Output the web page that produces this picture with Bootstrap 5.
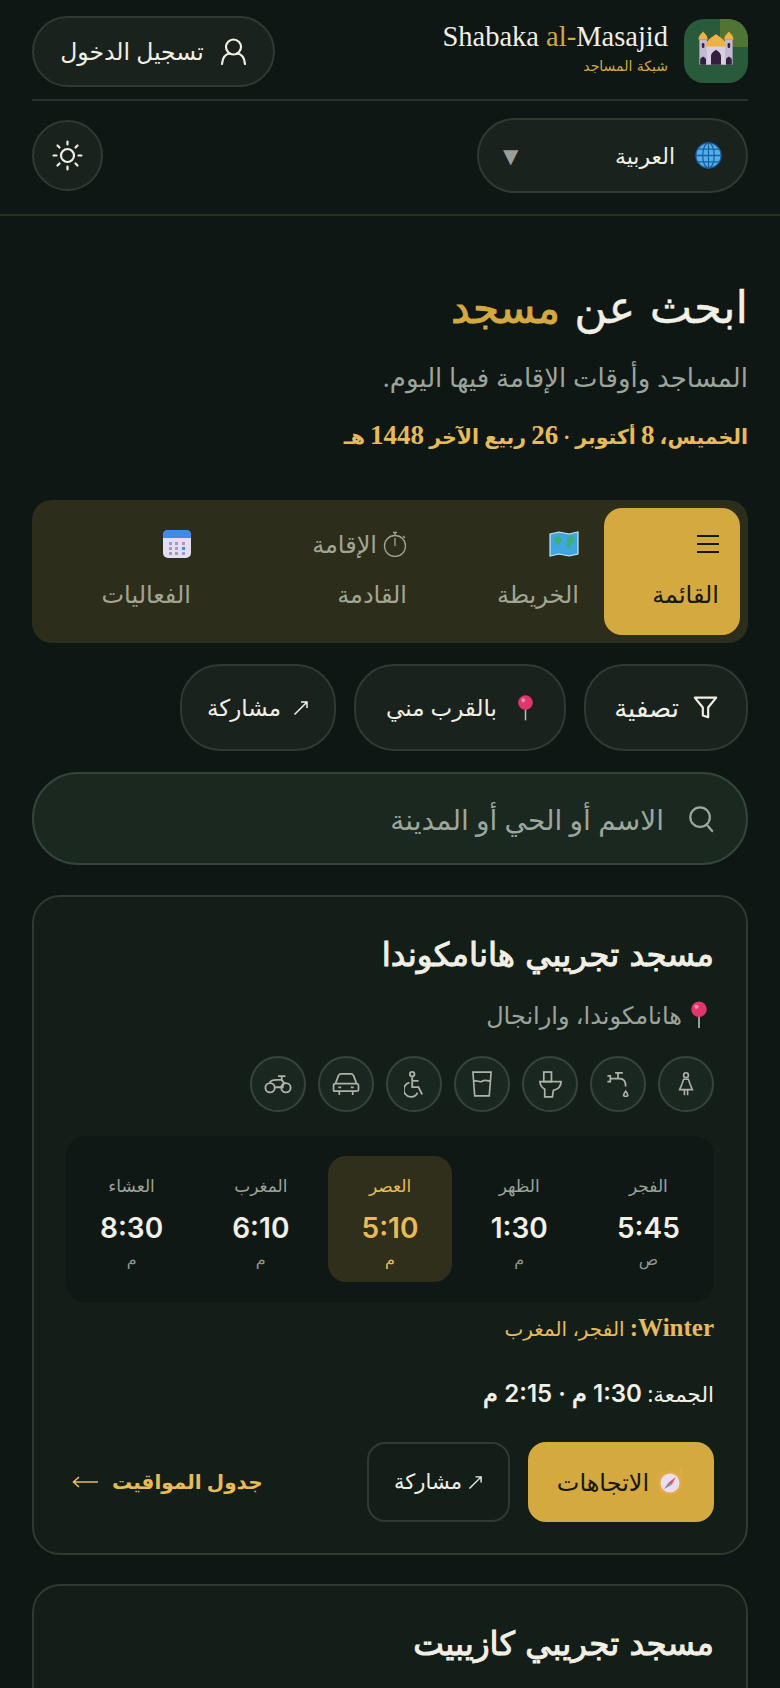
<!DOCTYPE html>
<html lang="ar" dir="rtl">
<head>
<meta charset="UTF-8">
<meta name="viewport" content="width=device-width, initial-scale=1.0">
<title>Shabaka al-Masajid</title>
<link rel="stylesheet" href="https://cdn.jsdelivr.net/npm/bootstrap@5.3.0/dist/css/bootstrap.min.css">
<style>
html, body { height: 1688px; overflow: hidden; }
body { background: #0e1714; color: #f2efe4; font-family: "Noto Sans", "DejaVu Sans", sans-serif; font-size: 20px; }
svg { flex: none; display: block; }
.site-head { padding: 16px 32px 0; border-bottom: 2px solid #252f27; height: 216px; }
.head-top { height: 85px; border-bottom: 2px solid #2a342c; align-items: flex-start; }
.head-bottom { padding-top: 17px; }
.logo-box { width: 64px; height: 64px; margin-top: 3px; border-radius: 20px; background: #2a5a3c; overflow: hidden; position: relative; }
.logo-box::before { content: ""; position: absolute; top: 0; right: 0; width: 28px; height: 28px; background: #4f7433; }
.logo-box svg { position: relative; }
.brand-name { font-family: "Liberation Serif", serif; font-size: 28.500px; line-height: 34px; margin-top: 4px; }
.brand-name em { font-style: normal; color: #d4a93f; }
.brand-sub { font-family: "DejaVu Sans", sans-serif; font-size: 14px; color: #d4a93f; line-height: 20px; margin-top: 2px; }
.pill-btn { background: #1a221e; border: 2px solid #2f3a33; border-radius: 40px; color: #f2efe4; display: flex; align-items: center; gap: 16px; font-size: 23px; padding: 0; }
.login-btn { width: 243px; height: 71px; justify-content: center; font-size: 23.500px; }
.lang-btn { width: 271px; height: 75px; padding: 0 24px; justify-content: flex-start; font-size: 22px; gap: 20px; }
.lang-btn .caret-mark { margin-inline-start: auto; color: #9c9f96; font-size: 20px; }
.sun-btn { width: 71px; height: 71px; justify-content: center; margin-top: 2px; }
.hero-box { padding: 0 32px; }
.hero-title { font-family: "DejaVu Sans", sans-serif; font-size: 45px; line-height: 60px; margin: 62px 0 0; font-weight: 400; -webkit-text-stroke: .4px currentColor; }
.hero-title em { font-style: normal; font-size: 42px; color: #d4a93f; -webkit-text-stroke: 1px currentColor; }
.hero-sub { color: #9ca39b; font-size: 26px; line-height: 36px; margin: 20px 0 0; }
.hero-date { color: #e8bb57; font-family: "Liberation Serif", "DejaVu Sans", serif; font-size: 20.500px; line-height: 32px; margin: 24px 0 0; font-weight: 700; }
.hero-date b { font-size: 27px; }
.tab-bar { margin-top: 47px; background: #2c2d1b; border-radius: 20px; padding: 8px; height: 143px; gap: 4px; }
.tab-item { color: #a3a594; font-size: 24px; line-height: 50px; padding: 11px 21px 17px; text-align: start; border-radius: 18px; white-space: nowrap; }
.tab-item .tab-line { display: flex; align-items: center; gap: 6px; height: 50px; }
.tab-active { background: #d4a93f; color: #17170b; width: 136px; }
.tab-map { width: 168px; }
.tab-iqama { width: 212px; }
.tab-events { width: 170px; }
.tool-row { margin-top: 21px; gap: 18px; }
.tool-btn { height: 87px; justify-content: center; gap: 14px; }
.tool-filter { width: 164px; font-size: 26px; }
.tool-near { width: 212px; gap: 20px; }
.tool-share { width: 156px; gap: 12px; }
.find-box { margin-top: 21px; height: 93px; background: #1a2820; border: 2px solid #34443a; border-radius: 46px; padding: 0 32px; gap: 24px; color: #9ca69d; font-size: 28px; }
.mosque-card { background: #141e19; border: 2px solid #2f3a30; border-radius: 28px; padding: 30px 32px; }
.card-one { margin-top: 30px; height: 660px; }
.card-two { margin-top: 29px; height: 300px; }
.mosque-name { font-family: "DejaVu Sans", sans-serif; font-size: 32.500px; font-weight: 400; -webkit-text-stroke: 1px currentColor; line-height: 48px; margin: 4px 0 0; }
.mosque-place { color: #9ca39b; font-size: 24px; line-height: 32px; margin: 20px 0 0; gap: 8px; }
.place-pin { margin-inline-start: 6px; }
.amenity-row { gap: 12px; margin-top: 25px; }
.amenity-dot { width: 56px; height: 56px; border-radius: 50%; border: 2px solid #37433b; background: #1a2620; color: #aeb2a8; display: flex; align-items: center; justify-content: center; }
.times-box { margin-top: 24px; background: #0f1814; border-radius: 20px; padding: 20px 4px; height: 166px; gap: 6px; }
.time-cell { flex: 1 1 0; text-align: center; height: 126px; border-radius: 18px; padding-top: 16px; }
.time-now { background: #2f2f1c; }
.time-now .time-name, .time-now .time-mer { color: #e8bb57; }
.time-now .time-val { color: #e8bb57; }
.time-name { color: #9ca39b; font-size: 17px; line-height: 28px; }
.time-val { font-family: "Inter", sans-serif; font-weight: 600; font-size: 28px; line-height: 40px; margin-top: 8px; }
.time-mer { color: #8f968e; font-size: 16px; line-height: 22px; }
.season-line { color: #e8bb57; font-size: 20px; margin-top: 10px; line-height: 32px; }
.season-line b { font-family: "Liberation Serif", serif; font-size: 25px; }
.friday-line { color: #f2efe4; font-size: 21.500px; margin-top: 33px; line-height: 32px; }
.friday-line b { font-family: "Inter", sans-serif; font-weight: 600; font-size: 24px; }
.action-row { margin-top: 32px; gap: 18px; }
.go-btn { width: 186px; height: 80px; background: #d4a93f; color: #17170b; border-radius: 18px; border: 0; font-size: 24px; display: flex; align-items: center; justify-content: center; gap: 8px; padding: 0; }
.share-btn { width: 143px; height: 80px; background: transparent; border: 2px solid #2f3a33; color: #f2efe4; border-radius: 18px; font-size: 21px; display: flex; align-items: center; justify-content: center; gap: 6px; padding: 0; }
.table-link { color: #e8bb57; text-decoration: none; font-size: 20px; font-weight: 700; margin-inline-start: auto; margin-inline-end: 6px; display: flex; gap: 14px; align-items: center; }
</style>
</head>
<body>

<header class="site-head">
  <div class="head-top d-flex justify-content-between">
    <div class="d-flex gap-3">
      <div class="logo-box">
        <svg width="64" height="64" viewBox="-6.500 -3 77 77">
          <rect x="14" y="24" width="36" height="28" fill="#d9cfe2"/>
          <rect x="12" y="22" width="9" height="30" fill="#c5b8d2"/>
          <rect x="43" y="22" width="9" height="30" fill="#c5b8d2"/>
          <path d="M11 22c0-5 3-7 5.500-10 2.500 3 5.500 5 5.500 10zM42 22c0-5 3-7 5.500-10 2.500 3 5.500 5 5.500 10z" fill="#eeb244"/>
          <path d="M20 30c0-8 6-10 12-15 6 5 12 7 12 15z" fill="#eeb244"/>
          <path d="M26 52V42c0-4 3-6 6-8 3 2 6 4 6 8v10zM13 52v-6c0-2 2-3 3.500-4 1.500 1 3.500 2 3.500 4v6zM44 52v-6c0-2 2-3 3.500-4 1.500 1 3.500 2 3.500 4v6z" fill="#33203f"/>
          <rect x="15" y="26" width="3" height="6" rx="1.500" fill="#33203f"/>
          <rect x="46" y="26" width="3" height="6" rx="1.500" fill="#33203f"/>
        </svg>
      </div>
      <div>
        <div class="brand-name" dir="ltr">Shabaka <em>al-</em>Masajid</div>
        <div class="brand-sub">شبكة المساجد</div>
      </div>
    </div>
    <button class="pill-btn login-btn" type="button">
      <svg width="27" height="27" viewBox="0 0 27 27" fill="none" stroke="#f2efe4" stroke-width="2.200" stroke-linecap="round"><circle cx="13.500" cy="9" r="7.500"/><path d="M2 26c.5-6 3.500-10 8-10.500M25 26c-.5-6-3.500-10-8-10.500"/></svg>
      <span>تسجيل الدخول</span>
    </button>
  </div>
  <div class="head-bottom d-flex justify-content-between align-items-start">
    <button class="pill-btn lang-btn" type="button">
      <svg width="27" height="27" viewBox="0 0 28 28" fill="none" stroke="#1d5f9e" stroke-width="1.300"><circle cx="14" cy="14" r="13" fill="#4eb1ec"/><ellipse cx="14" cy="14" rx="6" ry="13"/><path d="M14 1v26M1 14h26M3 7.500h22M3 20.500h22"/></svg>
      <span>العربية</span>
      <span class="caret-mark">▼</span>
    </button>
    <button class="pill-btn sun-btn" type="button" aria-label="theme">
      <svg width="31" height="31" viewBox="0 0 31 31" fill="none" stroke="#f2efe4" stroke-width="2.200" stroke-linecap="round"><circle cx="15.500" cy="15.500" r="6.500"/><path d="M15.500 1.500v3M15.500 26.500v3M1.500 15.500h3M26.500 15.500h3M5.500 5.500l2 2M23.500 23.500l2 2M5.500 25.500l2-2M23.500 7.500l2-2"/></svg>
    </button>
  </div>
</header>

<main class="hero-box">
  <h1 class="hero-title">ابحث عن <em>مسجد</em></h1>
  <p class="hero-sub">المساجد وأوقات الإقامة فيها اليوم.</p>
  <p class="hero-date">الخميس، <b>8</b> أكتوبر · <b>26</b> ربيع الآخر <b>1448</b> هـ</p>

  <div class="tab-bar d-flex">
    <div class="tab-item tab-active">
      <div class="tab-line"><svg width="22" height="20" viewBox="0 0 22 20" stroke="#17170b" stroke-width="2"><path d="M0 2h22M0 10h22M0 18h22"/></svg></div>
      <div>القائمة</div>
    </div>
    <div class="tab-item tab-map">
      <div class="tab-line"><svg width="30" height="26" viewBox="0 0 30 26"><path d="M1 3l9-2 10 2 9-2v22l-9 2-10-2-9 2z" fill="#3ea6e0" stroke="#cfe6f4" stroke-width="1.200"/><path d="M5 7l5-2 3 3-2 5-4 1zM18 6l6-1 2 5-4 3-1 6-3-3z" fill="#3fae7a"/></svg></div>
      <div>الخريطة</div>
    </div>
    <div class="tab-item tab-iqama">
      <div class="tab-line"><svg width="24" height="26" viewBox="0 0 24 26" fill="none" stroke="#a3a594" stroke-width="1.300"><circle cx="12" cy="15" r="10.500"/><path d="M12 15V7M10 1.500h4M12 1.500v3M20 5l2 2"/></svg><span>الإقامة</span></div>
      <div>القادمة</div>
    </div>
    <div class="tab-item tab-events">
      <div class="tab-line"><svg width="28" height="28" viewBox="0 0 28 28"><rect width="28" height="28" rx="5" fill="#e6ddf4"/><path d="M0 8V5a5 5 0 0 1 5-5h18a5 5 0 0 1 5 5v3z" fill="#3a8df0"/><path d="M6 12h3v3H6zM12 12h3v3h-3zM6 17h3v3H6zM12 17h3v3h-3zM6 22h3v3H6zM12 22h3v3h-3zM19 22h3v3h-3zM19 12h3v3h-3z" fill="#a49db5"/><path d="M19 17h3v3h-3z" fill="#3a8df0"/></svg></div>
      <div>الفعاليات</div>
    </div>
  </div>

  <div class="tool-row d-flex">
    <button class="pill-btn tool-btn tool-filter" type="button">
      <svg width="25" height="25" viewBox="0 0 28 28" fill="none" stroke="#f2efe4" stroke-width="2.400" stroke-linejoin="round"><path d="M2 3h24L17 14v11l-6-2v-9z"/></svg>
      <span>تصفية</span>
    </button>
    <button class="pill-btn tool-btn tool-near" type="button">
      <svg width="17" height="28" viewBox="0 0 22 34"><rect x="10" y="14" width="2" height="19" fill="#b9b9ae"/><circle cx="11" cy="10" r="9.500" fill="#e0356e"/><circle cx="8" cy="7" r="2.500" fill="#f58fb0"/></svg>
      <span>بالقرب مني</span>
    </button>
    <button class="pill-btn tool-btn tool-share" type="button">
      <svg width="16" height="16" viewBox="0 0 16 16" fill="none" stroke="#f2efe4" stroke-width="1.500"><path d="M1.500 14.500L14 2M8 2h6v6"/></svg>
      <span>مشاركة</span>
    </button>
  </div>

  <div class="find-box d-flex align-items-center">
    <svg width="26" height="28" viewBox="0 0 28 30" fill="none" stroke="#9ca69d" stroke-width="2.400" stroke-linecap="round"><circle cx="13" cy="13" r="10.500"/><path d="M20 21l6 7"/></svg>
    <span>الاسم أو الحي أو المدينة</span>
  </div>

  <section class="mosque-card card-one">
    <h2 class="mosque-name">مسجد تجريبي هانامكوندا</h2>
    <div class="mosque-place d-flex align-items-center">
      <svg class="place-pin" width="18" height="28" viewBox="0 0 22 34"><rect x="10" y="14" width="2" height="19" fill="#b9b9ae"/><circle cx="11" cy="10" r="9.500" fill="#e0356e"/><circle cx="8" cy="7" r="2.500" fill="#f58fb0"/></svg>
      <span>هانامكوندا، وارانجال</span>
    </div>
    <div class="amenity-row d-flex">
      <div class="amenity-dot"><svg width="16" height="28" viewBox="0 0 20 30" fill="none" stroke="currentColor" stroke-width="2"><circle cx="10" cy="4" r="3"/><path d="M7 9h6l2 6 3 7H2l3-7zM8 22v7M12 22v7"/></svg></div>
      <div class="amenity-dot"><svg width="24" height="25" viewBox="0 0 24 26" fill="none" stroke="currentColor" stroke-width="1.800"><path d="M1 4h3v6H1M4 7h10c4 0 6 3 6 8M9 1h8M12 1v6"/><path d="M20 20c-2 2.500-2.500 3.500-2 4.500 1 1.500 3 1.500 4 0 .5-1 0-2-2-4.500z"/></svg></div>
      <div class="amenity-dot"><svg width="23" height="27" viewBox="0 0 24 28" fill="none" stroke="currentColor" stroke-width="1.800"><rect x="5" y="1" width="8" height="10"/><path d="M1 11h22c0 5-4 8-8 9l-1 7H6v-8c-3-2-5-5-5-8z"/></svg></div>
      <div class="amenity-dot"><svg width="20" height="26" viewBox="0 0 22 28" fill="none" stroke="currentColor" stroke-width="1.800"><path d="M1 1h20l-2 26H3zM2 11c4-2 6 2 9 0s5-1 9 0"/></svg></div>
      <div class="amenity-dot"><svg width="20" height="27" viewBox="0 0 22 30" fill="none" stroke="currentColor" stroke-width="2"><circle cx="9" cy="3.500" r="2.500"/><path d="M9 7v11h7l4 8M9 11h7"/><path d="M6 13a8 8 0 1 0 9 11"/></svg></div>
      <div class="amenity-dot"><svg width="28" height="23" viewBox="0 0 28 24" fill="none" stroke="currentColor" stroke-width="1.800"><path d="M3 11l3-8c.5-1 1-2 3-2h10c2 0 2.500 1 3 2l3 8M3 11h22c1.500 0 2 1 2 2v5c0 1-.5 1-2 1H3c-1.500 0-2 0-2-1v-5c0-1 .5-2 2-2zM7 19v4M21 19v4M6 15h3M19 15h3"/></svg></div>
      <div class="amenity-dot"><svg width="28" height="19" viewBox="0 0 30 20" fill="none" stroke="currentColor" stroke-width="2"><circle cx="6.500" cy="13.500" r="5"/><circle cx="23.500" cy="13.500" r="5"/><path d="M6 8c2-3 5-3 7-3h6l3 4M12 13h8c0-3 1-5 3-4M15 1h8M19 1v4"/></svg></div>
    </div>
    <div class="times-box d-flex">
      <div class="time-cell"><div class="time-name">الفجر</div><div class="time-val">5:45</div><div class="time-mer">ص</div></div>
      <div class="time-cell"><div class="time-name">الظهر</div><div class="time-val">1:30</div><div class="time-mer">م</div></div>
      <div class="time-cell time-now"><div class="time-name">العصر</div><div class="time-val">5:10</div><div class="time-mer">م</div></div>
      <div class="time-cell"><div class="time-name">المغرب</div><div class="time-val">6:10</div><div class="time-mer">م</div></div>
      <div class="time-cell"><div class="time-name">العشاء</div><div class="time-val">8:30</div><div class="time-mer">م</div></div>
    </div>
    <div class="season-line"><b>Winter:</b> الفجر، المغرب</div>
    <div class="friday-line">الجمعة: <b>1:30 م · 2:15 م</b></div>
    <div class="action-row d-flex align-items-center">
      <button class="go-btn" type="button">
        <svg width="28" height="28" viewBox="0 0 28 28"><circle cx="13" cy="15" r="12" fill="#e6a94a"/><circle cx="13" cy="15" r="9.500" fill="#eadff0"/><path d="M19 9l-4.500 8-3-2.500z" fill="#e0556a"/><path d="M7 21l4.500-6.500 3 2.500z" fill="#8a8a9c"/><path d="M23 1l2 4" stroke="#e6a94a" stroke-width="2"/></svg>
        <span>الاتجاهات</span>
      </button>
      <button class="share-btn" type="button">
        <svg width="15" height="15" viewBox="0 0 16 16" fill="none" stroke="#f2efe4" stroke-width="1.500"><path d="M1.500 14.500L14 2M8 2h6v6"/></svg>
        <span>مشاركة</span>
      </button>
      <a class="table-link" href="#"><span>جدول المواقيت</span><svg width="26" height="14" viewBox="0 0 26 14" fill="none" stroke="#e8bb57" stroke-width="1.600"><path d="M26 7H1.500M7 2L1.500 7 7 12"/></svg></a>
    </div>
  </section>

  <section class="mosque-card card-two">
    <h2 class="mosque-name">مسجد تجريبي كازيبيت</h2>
  </section>
</main>

<script src="https://cdn.jsdelivr.net/npm/bootstrap@5.3.0/dist/js/bootstrap.bundle.min.js"></script>
</body>
</html>
